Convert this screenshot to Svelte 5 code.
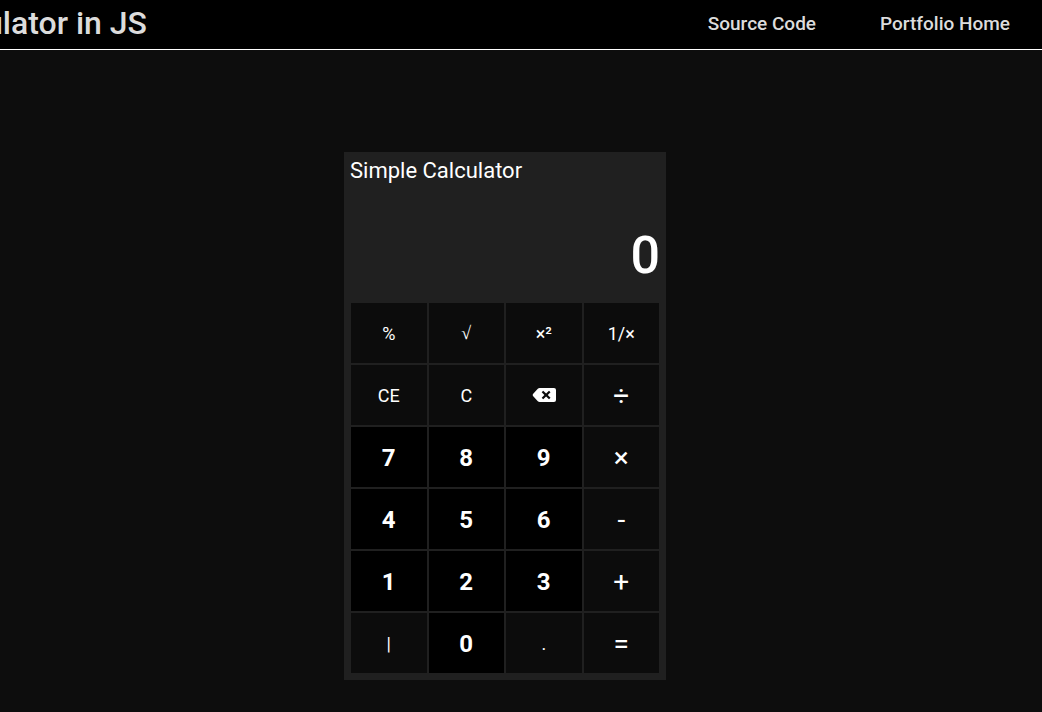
<script>
  const keys = [
    { label: '%', kind: 'function' },
    { label: '√', kind: 'function root' },
    { label: '×²', kind: 'function' },
    { label: '1/×', kind: 'function' },
    { label: 'CE', kind: 'function' },
    { label: 'C', kind: 'function' },
    { label: 'Backspace', kind: 'icon' },
    { label: '÷', kind: 'operator' },
    { label: '7', kind: 'digit' },
    { label: '8', kind: 'digit' },
    { label: '9', kind: 'digit' },
    { label: '×', kind: 'operator' },
    { label: '4', kind: 'digit' },
    { label: '5', kind: 'digit' },
    { label: '6', kind: 'digit' },
    { label: '-', kind: 'operator' },
    { label: '1', kind: 'digit' },
    { label: '2', kind: 'digit' },
    { label: '3', kind: 'digit' },
    { label: '+', kind: 'operator' },
    { label: '|', kind: 'function' },
    { label: '0', kind: 'digit' },
    { label: '.', kind: 'function' },
    { label: '=', kind: 'operator' }
  ];
</script>

<header>
  <div class="brand"><h1>Calculator in JS</h1></div>
  <nav>
    <a href="#source">Source Code</a>
    <a href="#home">Portfolio Home</a>
  </nav>
</header>

<main>
  <section class="calculator">
    <h2>Simple Calculator</h2>
    <output>0</output>
    <div class="keys">
      {#each keys as key}
        {#if key.kind === 'icon'}
          <button type="button" class="function" aria-label={key.label}>
            <svg viewBox="0 0 24 14" width="24" height="14" aria-hidden="true">
              <path
                fill="#fff"
                fill-rule="evenodd"
                d="M7.6 0H22Q24 0 24 2V12Q24 14 22 14H7.6Q6.6 14 5.8 13.3L1 8Q.3 7 1 6L5.8 .7Q6.6 0 7.6 0ZM11.2 2.7L9.7 4.2L12.4 7L9.7 9.8L11.2 11.3L14.1 8.5L17 11.3L18.5 9.8L15.8 7L18.5 4.2L17 2.7L14.1 5.5Z"
              />
            </svg>
          </button>
        {:else}
          <button type="button" class={key.kind}>{key.label}</button>
        {/if}
      {/each}
    </div>
  </section>
</main>

<style>
  :global(body) {
    background: #0d0d0d;
    font-family: Roboto, sans-serif;
  }

  header {
    display: flex;
    align-items: center;
    justify-content: space-between;
    padding-right: 32px;
    padding-bottom: 2px;
    background: #000;
    border-bottom: 1px solid #fff;
    color: #dcdcdc;
  }

  .brand {
    display: flex;
    justify-content: flex-end;
    width: 147px;
    overflow: hidden;
  }

  h1 {
    flex: none;
    margin: 0;
    font-size: 32px;
    font-weight: 500;
    line-height: 47px;
    white-space: nowrap;
  }

  nav {
    display: flex;
    gap: 64px;
  }

  nav a {
    color: inherit;
    font-size: 19px;
    font-weight: 500;
    line-height: 24px;
    text-decoration: none;
  }

  main {
    display: flex;
    justify-content: center;
    padding: 102px 32px 32px 0;
  }

  .calculator {
    display: flex;
    flex-direction: column;
    box-sizing: border-box;
    width: 100%;
    max-width: 322px;
    padding: 6px;
    background: #202020;
    color: #fff;
  }

  h2 {
    margin: 0;
    font-size: 22px;
    font-weight: 400;
    line-height: 26px;
  }

  output {
    padding: 40px 0 15px;
    font-size: 52px;
    font-weight: 500;
    line-height: 64px;
    text-align: right;
  }

  .keys {
    display: grid;
    grid-template-columns: repeat(4, 1fr);
    gap: 2px;
    padding: 0 1px 1px;
  }

  button {
    display: flex;
    align-items: center;
    justify-content: center;
    height: 60px;
    padding: 0;
    border: 0;
    color: #fff;
    font-family: inherit;
  }

  .function {
    background: #0c0c0c;
    font-size: 18px;
  }

  .root {
    font-family: "Liberation Serif", serif;
  }

  .operator {
    background: #0c0c0c;
    font-size: 28px;
  }

  .digit {
    padding-top: 2px;
    background: #000;
    font-size: 24px;
    font-weight: 700;
  }
</style>
